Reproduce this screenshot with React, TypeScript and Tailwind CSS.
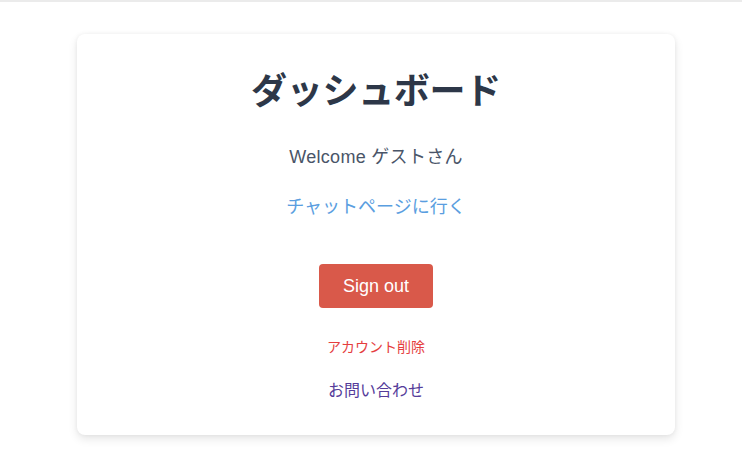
const App = (): JSX.Element => {
  return (
    <div
      className="min-h-[468px] bg-white"
      style={{ fontFamily: '"Liberation Sans", "Noto Sans CJK JP", sans-serif' }}
    >
      <div className="h-[2px] bg-[#ebebeb]"></div>
      <div className="flex justify-center pt-8">
        <div className="w-[598px] ml-[10px] rounded-lg bg-white shadow-[0_4px_10px_rgba(0,0,0,0.10),0_0_4px_rgba(0,0,0,0.05)] flex flex-col items-center pt-[38px] pb-[32px]">
          <h1 className="text-4xl leading-10 font-bold text-[#2d3748] tracking-[-0.3px]">
            ダッシュボード
          </h1>
          <p className="mt-[31px] text-lg leading-7 text-[#4a5568] tracking-[0.3px]">
            Welcome ゲストさん
          </p>
          <a href="#" className="mt-[22px] text-lg leading-7 text-[#5a9ee0]">
            チャットページに行く
          </a>
          <button className="mt-[43px] w-[114px] h-[44px] rounded bg-[#d9594a] text-lg text-white">
            Sign out
          </button>
          <button className="mt-[29px] text-sm leading-5 text-[#e53e3e]">
            アカウント削除
          </button>
          <a href="#" className="mt-[22px] text-base leading-6 text-[#553c9a]">
            お問い合わせ
          </a>
        </div>
      </div>
    </div>
  );
};

export default App;
